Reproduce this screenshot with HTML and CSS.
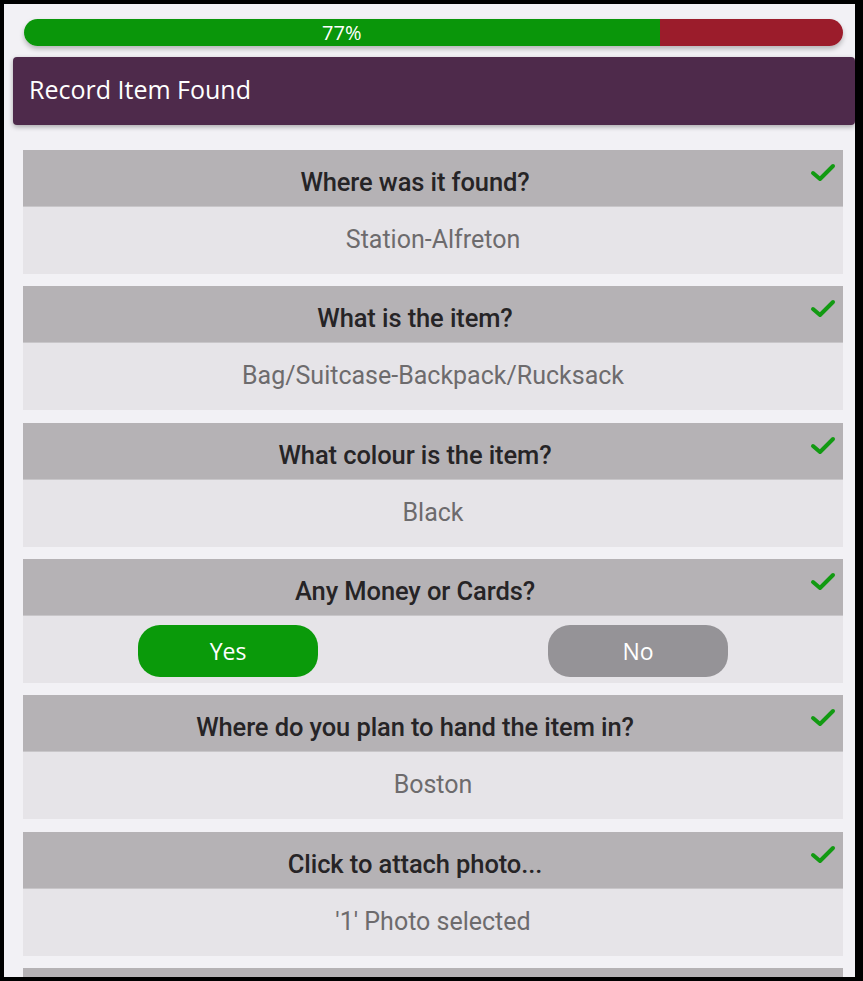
FILE: index.html
```
<!DOCTYPE html>
<html>
<head>
<meta charset="utf-8">
<link rel="stylesheet" href="styles.css">
</head>
<body>
<div class="screen">
  <div class="progress">
    <div class="progress-done" style="width:77.6%">77%</div>
    <div class="progress-left"></div>
  </div>
  <div class="titlebar">Record Item Found</div>
  <div class="list">
    <div class="card">
      <div class="q">Where was it found?<svg class="tick" viewBox="0 0 26 20"><path d="M3 11 L10 17 L23 4" /></svg></div>
      <div class="a">Station-Alfreton</div>
    </div>
    <div class="card">
      <div class="q">What is the item?<svg class="tick" viewBox="0 0 26 20"><path d="M3 11 L10 17 L23 4" /></svg></div>
      <div class="a">Bag/Suitcase-Backpack/Rucksack</div>
    </div>
    <div class="card">
      <div class="q">What colour is the item?<svg class="tick" viewBox="0 0 26 20"><path d="M3 11 L10 17 L23 4" /></svg></div>
      <div class="a">Black</div>
    </div>
    <div class="card">
      <div class="q">Any Money or Cards?<svg class="tick" viewBox="0 0 26 20"><path d="M3 11 L10 17 L23 4" /></svg></div>
      <div class="a buttons">
        <div class="btn yes">Yes</div>
        <div class="btn no">No</div>
      </div>
    </div>
    <div class="card">
      <div class="q">Where do you plan to hand the item in?<svg class="tick" viewBox="0 0 26 20"><path d="M3 11 L10 17 L23 4" /></svg></div>
      <div class="a">Boston</div>
    </div>
    <div class="card">
      <div class="q">Click to attach photo...<svg class="tick" viewBox="0 0 26 20"><path d="M3 11 L10 17 L23 4" /></svg></div>
      <div class="a">'1' Photo selected</div>
    </div>
    <div class="card">
      <div class="q"></div>
    </div>
  </div>
</div>
</body>
</html>
```
FILE: styles.css
```
html, body {
  margin: 0;
  padding: 0;
  background: #000;
  height: 981px;
  overflow: hidden;
}
body {
  padding: 4px 8px 4px 4px;
  box-sizing: border-box;
}
.screen {
  background: #f2f1f5;
  height: 973px;
  overflow: hidden;
  padding: 15px 0 0 9px;
  box-sizing: border-box;
  font-family: "Liberation Sans", Arial, sans-serif;
}
.progress {
  margin: 0 12px 0 11px;
  height: 27px;
  border-radius: 14px;
  display: flex;
  overflow: hidden;
  box-shadow: 0 3px 5px rgba(0,0,0,0.25);
}
.progress-done {
  background: #0a960a;
  color: #fff;
  font-family: "Open Sans", sans-serif;
  font-size: 20px;
  line-height: 27px;
  text-align: center;
}
.progress-left {
  flex: 1;
  background: #9b1c2b;
}
.titlebar {
  margin-top: 11px;
  height: 68px;
  background: #4e2a4b;
  border-radius: 4px;
  color: #fff;
  font-family: "Open Sans", sans-serif;
  font-size: 25px;
  line-height: 64px;
  padding-left: 16px;
  box-shadow: 0 2px 5px rgba(0,0,0,0.3);
}
.list {
  padding: 25px 12px 0 10px;
  display: flex;
  flex-direction: column;
  gap: 12.33px;
}
.card {
  display: flex;
  flex-direction: column;
}
.q {
  position: relative;
  height: 57px;
  box-sizing: border-box;
  padding-right: 36px;
  background: #b5b2b5;
  color: #262426;
  font-size: 25.5px;
  font-weight: 500;
  font-family: Roboto, "Liberation Sans", sans-serif;
  text-align: center;
  line-height: 64px;
  border-bottom: 1px solid #c8c6c9;
  letter-spacing: -0.1px;
}
.tick {
  position: absolute;
  right: 7px;
  top: 12px;
  width: 26px;
  height: 20px;
}
.tick path {
  fill: none;
  stroke: #129a12;
  stroke-width: 4;
  stroke-linecap: round;
  stroke-linejoin: round;
}
.a {
  height: 67px;
  background: #e6e4e8;
  color: #6d6b6d;
  font-size: 25px;
  font-family: Roboto, "Liberation Sans", sans-serif;
  text-align: center;
  line-height: 66px;
}
.buttons {
  display: flex;
  justify-content: space-between;
  align-items: flex-start;
  padding: 9px 115px 0 115px;
  box-sizing: border-box;
}
.btn {
  width: 180px;
  height: 52px;
  border-radius: 22px;
  color: #fff;
  line-height: 52px;
  font-size: 23px;
  font-family: "Open Sans", sans-serif;
}
.yes {
  background: #0a9a0a;
}
.no {
  background: #959397;
}
```
